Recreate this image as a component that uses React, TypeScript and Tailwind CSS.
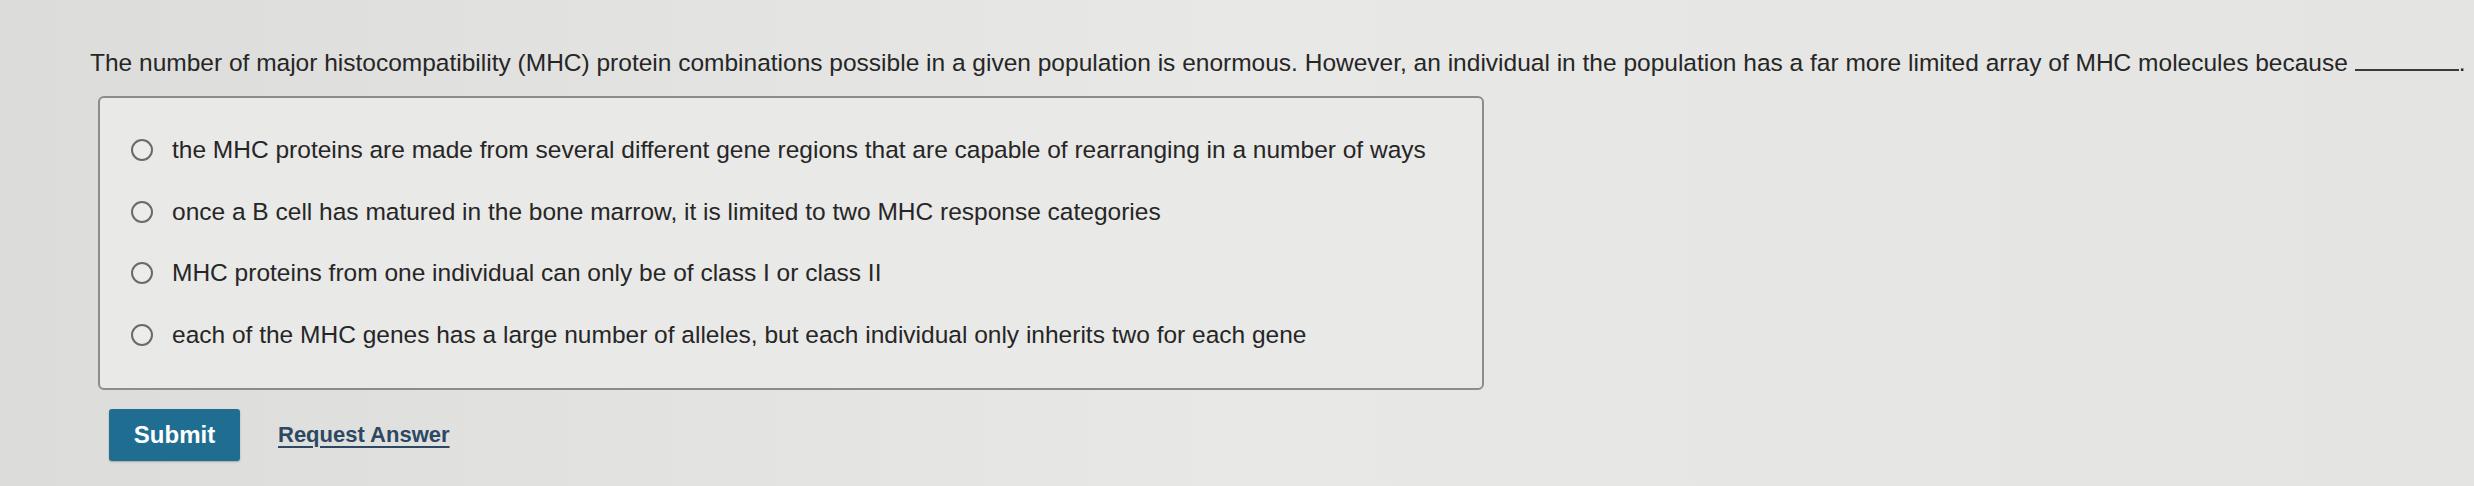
import React from "react";

const options = [
  "the MHC proteins are made from several different gene regions that are capable of rearranging in a number of ways",
  "once a B cell has matured in the bone marrow, it is limited to two MHC response categories",
  "MHC proteins from one individual can only be of class I or class II",
  "each of the MHC genes has a large number of alleles, but each individual only inherits two for each gene",
];

export default function App() {
  return (
    <main
      className="h-[486px] w-[2474px] overflow-hidden bg-gradient-to-r from-[#dcdcda] via-[#e8e8e6] to-[#e4e4e2] pl-[90px] pt-[47px] text-[#262626]"
      style={{ fontFamily: '"Liberation Sans", Arial, sans-serif' }}
    >
      {/* Question */}
      <p className="whitespace-nowrap text-[24.5px] leading-[31px]">
        The number of major histocompatibility (MHC) protein combinations possible in a given population is enormous. However, an individual in the population has a far more limited array of MHC molecules because{" "}
        <span className="inline-block w-[104px] border-b-2 border-[#3a3a3a] align-baseline" />.
      </p>

      {/* Answer choices */}
      <div className="ml-[8px] mt-[18px] flex w-[1386px] flex-col gap-[37.5px] rounded-[6px] border-2 border-[#8c8c8c] bg-[#e9e9e7] pb-[41px] pl-[31px] pt-[40px]">
        {options.map((o) => (
          <label key={o} className="flex items-center gap-[19px] text-[24.5px] leading-[24px]">
            <span className="h-[22px] w-[22px] shrink-0 rounded-full border-2 border-[#6a6a6a] bg-[#ececea]" />
            {o}
          </label>
        ))}
      </div>

      {/* Actions */}
      <div className="ml-[19px] mt-[19px] flex items-center gap-[38px]">
        <button className="h-[52px] w-[131px] rounded-[3px] bg-[#1f6e92] text-[24px] font-bold text-white shadow-[0_1px_2px_rgba(0,0,0,0.25)]">
          Submit
        </button>
        <a href="#" className="text-[22px] font-bold text-[#2c4862] underline underline-offset-[4px]">
          Request Answer
        </a>
      </div>
    </main>
  );
}
